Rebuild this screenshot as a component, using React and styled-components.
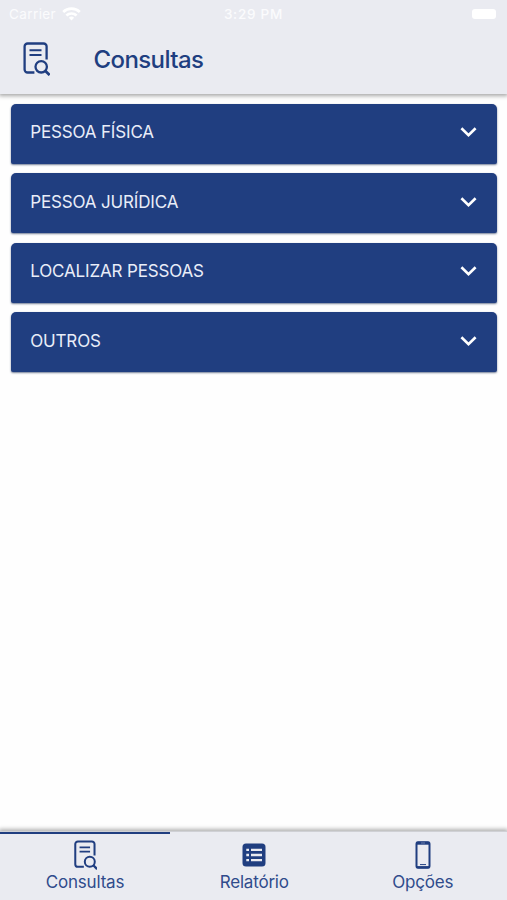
import styled, { createGlobalStyle } from 'styled-components';

const GlobalStyle = createGlobalStyle`
  * {
    box-sizing: border-box;
  }

  body {
    margin: 0;
    background-color: #fefefe;
    font-family: Inter, 'Liberation Sans', sans-serif;
  }
`;

const Screen = styled.div`
  display: flex;
  flex-direction: column;
  height: 900px;
  overflow: hidden;
`;

const Header = styled.header`
  height: 94px;
  flex-shrink: 0;
  background-color: #eaebf1;
  box-shadow: 0 1px 4px 1px rgba(0, 0, 0, 0.34);
`;

// status bar
const StatusBar = styled.div`
  display: grid;
  grid-template-columns: 1fr auto 1fr;
  align-items: center;
  height: 27px;
  padding: 0 11px 0 9px;
  color: #fbfbfd;
  font-size: 13.5px;
`;

const Carrier = styled.div`
  display: flex;
  align-items: center;
  gap: 6px;
  letter-spacing: 0.4px;
`;

const Clock = styled.span`
  padding-left: 2px;
  font-weight: 500;
  font-size: 13.5px;
  letter-spacing: 0.75px;
`;

const Battery = styled.div`
  justify-self: end;
  width: 24px;
  height: 10px;
  border-radius: 3px;
  background-color: #fff;
`;

const TitleBar = styled.div`
  display: flex;
  align-items: center;
  height: 64px;
  padding-left: 22px;
`;

const Title = styled.h1`
  margin: 1px 0 0 43.5px;
  color: #203e80;
  font-size: 24px;
  font-weight: 500;
  letter-spacing: -0.6px;
`;

// list
const List = styled.main`
  display: flex;
  flex: 1;
  flex-direction: column;
  gap: 9.6px;
  padding: 9.6px 10px 0 10.5px;
`;

const Card = styled.button`
  display: flex;
  align-items: center;
  justify-content: space-between;
  height: 60px;
  padding: 0 20px 3px 19.7px;
  border: 0;
  border-radius: 5px 5px 2px 2px;
  background-color: #203e80;
  box-shadow: 0 1px 2px rgba(20, 40, 80, 0.6);
  color: #e9edf8;
  font-family: inherit;
  font-size: 17px;
  letter-spacing: -0.15px;
`;

// bottom tabs
const Tabs = styled.nav`
  display: grid;
  grid-template-columns: 170px 1fr 1fr;
  height: 69px;
  flex-shrink: 0;
  background-color: #eaebf1;
  box-shadow: 0 -1px 4px 1px rgba(0, 0, 0, 0.3);
`;

const Tab = styled.button`
  display: flex;
  flex-direction: column;
  align-items: center;
  padding: 0;
  border: 0;
  box-shadow: inset 0 1px 0 #cfd0d5${(props) => (props.$active ? ', inset 0 3px 0 #203e80' : '')};
  background: none;
  color: #304b8c;
  font-family: inherit;
  font-size: 17px;
  line-height: 22px;
  letter-spacing: -0.2px;
`;

const TabIcon = styled.span`
  display: flex;
  align-items: center;
  justify-content: center;
  height: 30px;
  margin: 9px 0 1px;
`;

function DocSearchIcon({ width, height }) {
  return (
    <svg width={width} height={height} viewBox="0 0 28 34" fill="none" stroke="#203e80" strokeWidth="2.3">
      <path d="M24.6 17.5V4.5a3 3 0 0 0-3-3h-16a3 3 0 0 0-3 3v23a3 3 0 0 0 3 3h6.8" />
      <path d="M7.5 8.2h12M7.5 13h12" strokeWidth="2" />
      <circle cx="19.2" cy="24.8" r="5.7" />
      <path d="M23.2 28.7l4.4 4.4" strokeWidth="2.7" />
    </svg>
  );
}

function WifiIcon() {
  return (
    <svg width="19" height="14" viewBox="0 0 19 14" fill="none" stroke="#fff" strokeWidth="2.7">
      <path d="M1.2 5a12 12 0 0 1 16.6 0M4.4 8.5a7.5 7.5 0 0 1 10.2 0" />
      <path d="M9.5 13.5L6.9 10.8a3.8 3.8 0 0 1 5.2 0z" fill="#fff" stroke="none" />
    </svg>
  );
}

function ChevronIcon() {
  return (
    <svg width="17" height="12" viewBox="0 0 17 12" fill="none" stroke="#fff" strokeWidth="2.6">
      <path d="M1.4 2.2l7.1 7 7.1-7" />
    </svg>
  );
}

function ListIcon() {
  return (
    <svg width="24" height="24" viewBox="0 0 24 24">
      <rect x="0.5" y="0.5" width="23" height="23" rx="3.5" fill="#203e80" />
      <path
        d="M4.3 6.8h2.7M9 6.8h11M4.3 12h2.7M9 12h11M4.3 17.2h2.7M9 17.2h11"
        stroke="#eaebf1"
        strokeWidth="2.3"
      />
    </svg>
  );
}

function PhoneIcon() {
  return (
    <svg width="16" height="28" viewBox="0 0 16 28" fill="none" stroke="#203e80">
      <rect x="1.5" y="1.2" width="13" height="25.6" rx="1.8" strokeWidth="2" />
      <path d="M1.5 2.2h13" strokeWidth="3" />
      <path d="M1.5 26.2h13" strokeWidth="2.2" />
      <path d="M5 23.6h6" strokeWidth="1" />
      <path d="M6 2h4" stroke="#8290b8" strokeWidth="0.8" />
    </svg>
  );
}

const cards = ['PESSOA FÍSICA', 'PESSOA JURÍDICA', 'LOCALIZAR PESSOAS', 'OUTROS'];

export default function App() {
  return (
    <>
      <GlobalStyle />
      <Screen>
        <Header>
          <StatusBar>
            <Carrier>
              Carrier
              <WifiIcon />
            </Carrier>
            <Clock>3:29 PM</Clock>
            <Battery />
          </StatusBar>
          <TitleBar>
            <DocSearchIcon width={28} height={34} />
            <Title>Consultas</Title>
          </TitleBar>
        </Header>

        <List>
          {cards.map((label) => (
            <Card key={label}>
              {label}
              <ChevronIcon />
            </Card>
          ))}
        </List>

        <Tabs>
          <Tab $active>
            <TabIcon>
              <DocSearchIcon width={24.5} height={30} />
            </TabIcon>
            Consultas
          </Tab>
          <Tab>
            <TabIcon>
              <ListIcon />
            </TabIcon>
            Relatório
          </Tab>
          <Tab>
            <TabIcon>
              <PhoneIcon />
            </TabIcon>
            Opções
          </Tab>
        </Tabs>
      </Screen>
    </>
  );
}
